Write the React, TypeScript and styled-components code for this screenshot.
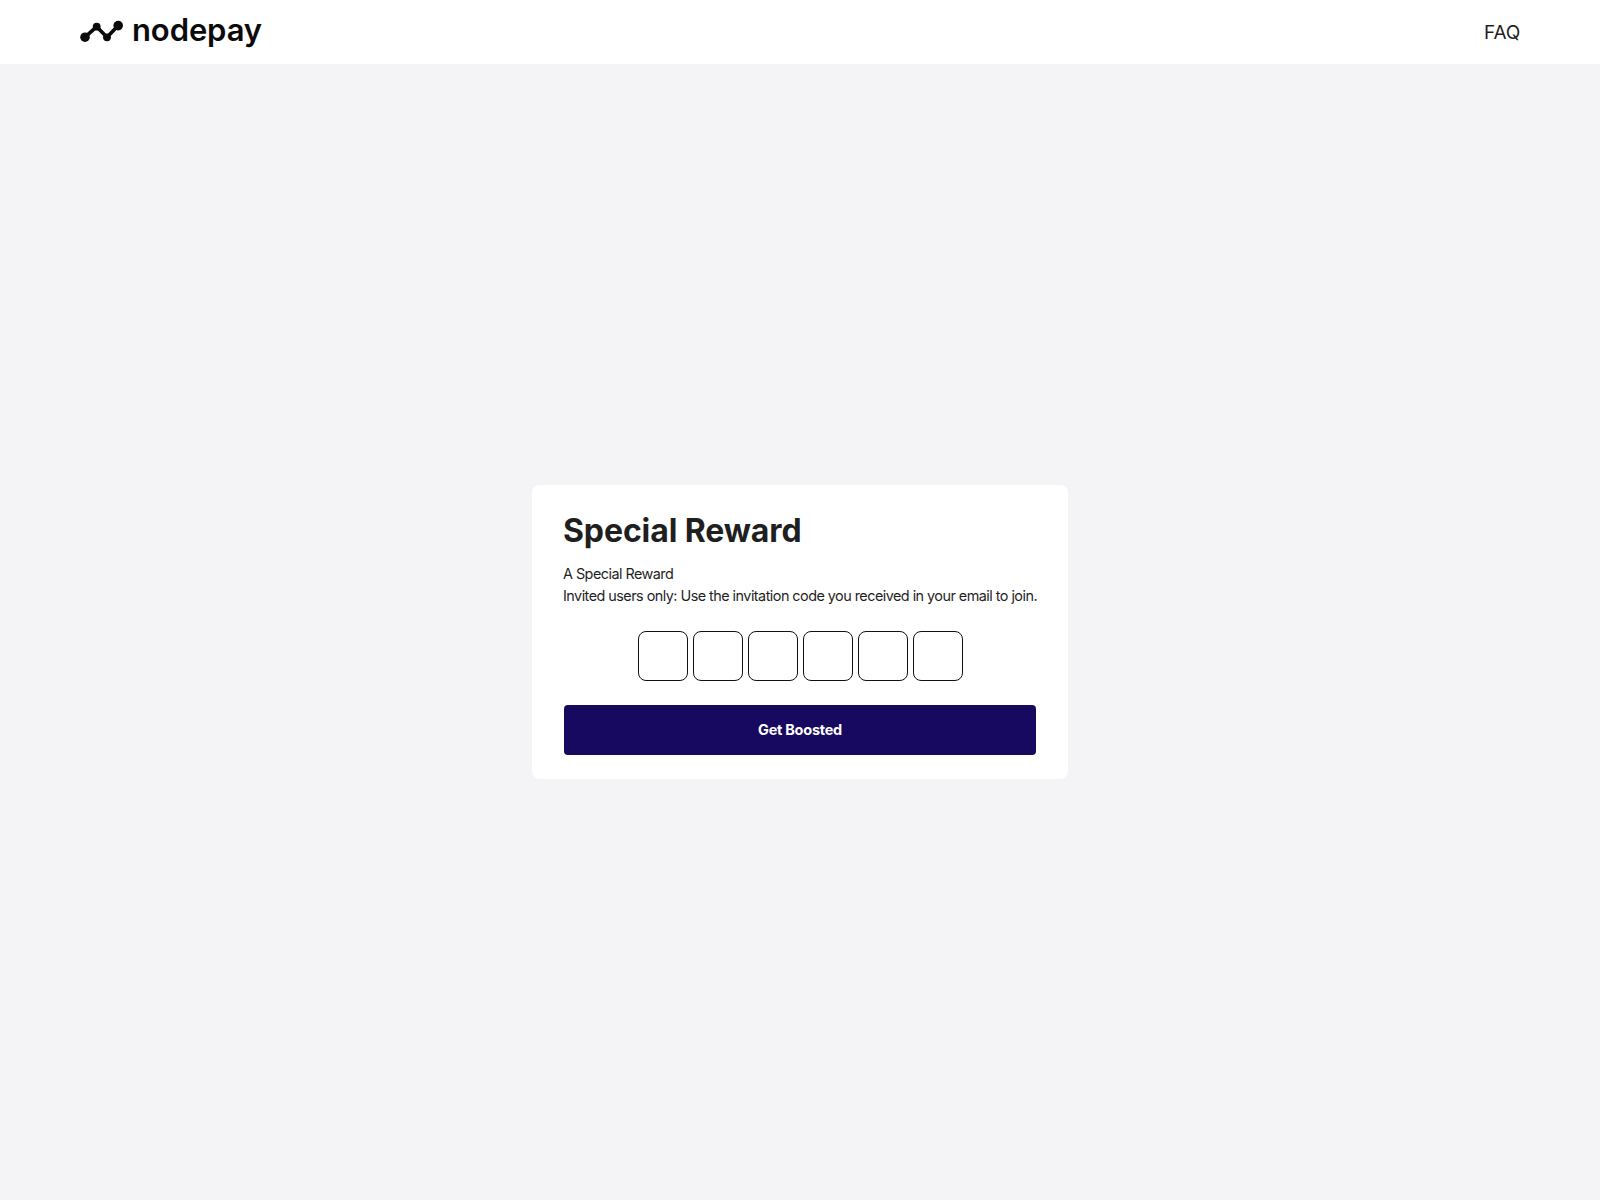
import React from 'react';
import styled, { createGlobalStyle } from 'styled-components';

const GlobalStyle = createGlobalStyle`
  html, body {
    margin: 0;
    padding: 0;
    background: #f4f4f6;
    font-family: Inter, 'Liberation Sans', sans-serif;
    color: #1f1f1f;
  }
  * {
    box-sizing: border-box;
  }
`;

const Page = styled.div`
  min-height: 1200px;
  display: flex;
  flex-direction: column;
`;

const Header = styled.header`
  height: 64px;
  background: #fff;
  padding: 0 80px;
  display: flex;
  align-items: center;
  justify-content: space-between;
`;

const Brand = styled.a`
  display: flex;
  align-items: center;
  gap: 8px;
  color: #0b0b0b;
  text-decoration: none;
`;

const BrandName = styled.span`
  font-size: 31px;
  font-weight: 600;
  letter-spacing: -0.1px;
  line-height: 1;
  margin-top: -5px;
`;

const NavLink = styled.a`
  font-size: 19px;
  color: #1f1f1f;
  letter-spacing: -0.2px;
`;

const Main = styled.main`
  flex: 1;
  display: flex;
  align-items: center;
  justify-content: center;
`;

const Card = styled.section`
  width: 536px;
  height: 294px;
  background: #fff;
  border-radius: 8px;
  padding: 26px 32px 24px;
`;

const Title = styled.h1`
  margin: 0 0 12px -1px;
  font-size: 32px;
  line-height: 40px;
  font-weight: 700;
  letter-spacing: -0.1px;
  color: #1f1f1f;
`;

const Description = styled.p`
  margin: 0 0 24px -1px;
  font-size: 14.4px;
  line-height: 22px;
  letter-spacing: -0.53px;
  white-space: nowrap;
  color: #1f1f1f;
`;

const CodeRow = styled.div`
  display: flex;
  justify-content: center;
  gap: 5px;
  margin-bottom: 24px;
`;

const CodeInput = styled.input`
  width: 50px;
  height: 50px;
  border: 1px solid #111;
  border-radius: 8px;
  background: #fff;
  padding: 0;
  text-align: center;
  outline: none;
  font-size: 20px;
`;

const SubmitButton = styled.button`
  width: 100%;
  height: 50px;
  border: 0;
  border-radius: 4px;
  background: #170860;
  color: #fff;
  font-family: inherit;
  font-size: 14.5px;
  font-weight: 700;
  letter-spacing: -0.25px;
  padding: 0 0 2px;
  cursor: pointer;
`;

const LogoMark = () => (
  <svg width="44" height="24" viewBox="0 0 44 24" fill="none">
    <path
      d="M5 17.2 L16.7 6.7 L27 17.3 L38.2 5.6"
      stroke="#0b0b0b"
      strokeWidth="3.6"
      strokeLinecap="round"
      strokeLinejoin="round"
    />
    <circle cx="5" cy="17.2" r="4.8" fill="#0b0b0b" />
    <circle cx="16.7" cy="6.7" r="3.9" fill="#0b0b0b" />
    <circle cx="27" cy="17.3" r="3.9" fill="#0b0b0b" />
    <circle cx="38.2" cy="5.6" r="4.8" fill="#0b0b0b" />
  </svg>
);

const codeSlots = [0, 1, 2, 3, 4, 5];

export default function App() {
  return (
    <Page>
      <GlobalStyle />
      <Header>
        <Brand href="#">
          <LogoMark />
          <BrandName>nodepay</BrandName>
        </Brand>
        <NavLink>FAQ</NavLink>
      </Header>
      <Main>
        <Card>
          <Title>Special Reward</Title>
          <Description>
            A Special Reward
            <br />
            Invited users only: Use the invitation code you received in your email to join.
          </Description>
          <CodeRow>
            {codeSlots.map(slot => (
              <CodeInput key={slot} maxLength={1} />
            ))}
          </CodeRow>
          <SubmitButton>Get Boosted</SubmitButton>
        </Card>
      </Main>
    </Page>
  );
}
